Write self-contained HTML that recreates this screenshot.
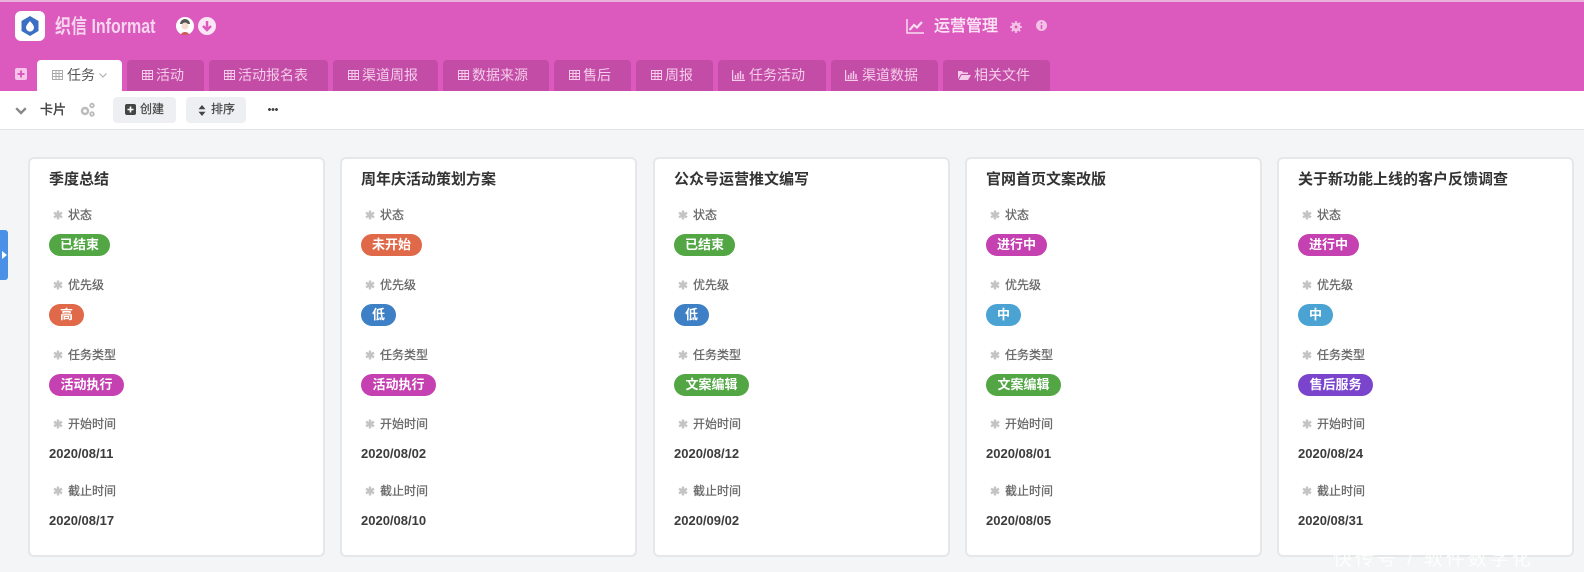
<!DOCTYPE html>
<html lang="zh">
<head>
<meta charset="utf-8">
<style>
*{box-sizing:border-box}
html,body{margin:0;padding:0}
body{width:1584px;height:566px;overflow:hidden;position:relative;background:#f4f5f6;font-family:"Liberation Sans","Noto Sans CJK SC",sans-serif;color:#333}
.abs,.tab,.card,.card>*{position:absolute}
#hd{left:0;top:0;width:1584px;height:91px;background:#dc59bd;border-top:2px solid #e9b3dc;position:absolute}
#bar{position:absolute;left:0;top:91px;width:1584px;height:39px;background:#fff;border-bottom:1px solid #e3e3e5}
.tab{top:60px;height:31px;background:#c34da6;border-radius:4px 4px 0 0;color:#f5cdea;font-size:14px;line-height:31px;white-space:nowrap}
.tab svg{position:absolute;top:10px}
.tab span{position:absolute;top:0}
.tab.on{background:#fff;color:#555}
.card{top:157px;width:297px;height:400px;background:#fff;border:2px solid #e6e7e9;border-radius:6px}
.t{left:19px;top:11px;font-size:15px;line-height:20px;font-weight:700;color:#333;white-space:nowrap}
.s{left:23px;width:10px;height:10px}
.l{left:38px;font-size:12px;line-height:16px;color:#666;-webkit-text-stroke:.25px #666;white-space:nowrap}
.p{left:19px;height:22px;border-radius:11px;color:#fff;font-size:13px;font-weight:700;line-height:21px;text-align:center;white-space:nowrap}
.d{left:19px;font-size:13px;line-height:16px;font-weight:700;color:#3c3c3c;white-space:nowrap}
.y1{top:48px}.y2{top:118px}.y3{top:188px}.y4{top:257px}.y5{top:324px}
.s.y1{top:51px}.s.y2{top:121px}.s.y3{top:191px}.s.y4{top:260px}.s.y5{top:327px}
.p1{top:75px}.p2{top:145px}.p3{top:215px}
.d1{top:287px}.d2{top:354px}
.w3{width:61px}.w1{width:35px}.w4{width:75px}
.gr{background:#52a644}.or{background:#e0694a}.pk{background:#c540b0}.bl{background:#3d80c5}.lb{background:#4ba3d4}.pu{background:#7a45cc}
.btn{position:absolute;top:97px;height:26px;background:#eeeff2;border-radius:4px;font-size:12px;line-height:25px;color:#444;-webkit-text-stroke:.2px #444}
</style>
</head>
<body>
<div id="hd"></div>
<div id="bar"></div>

<!-- logo -->
<svg class="abs" style="left:15px;top:11px" width="30" height="30" viewBox="0 0 30 30"><rect width="30" height="30" rx="6" fill="#fff"/><path d="M15 5l8.500 5v10L15 25l-8.500-5V10z" fill="#3b6fc4"/><path d="M15 10c2.500 3 4 4.800 4 6.600a4 4 0 0 1-8 0c0-1.800 1.500-3.600 4-6.600z" fill="#fff"/></svg>
<div class="abs" style="left:55px;top:13px;font-size:20px;line-height:28px;color:#f7d5ee;font-weight:700;white-space:nowrap;transform:scaleX(.8);transform-origin:0 0">织信 Informat</div>
<svg class="abs" style="left:176px;top:17px" width="18" height="18" viewBox="0 0 18 18"><circle cx="9" cy="9" r="9" fill="#fff"/><path d="M4 7a5 5 0 0 1 10 0z" fill="#555"/><circle cx="9" cy="9" r="3.500" fill="#f5dcd0"/><path d="M5 18c0-4 8-4 8 0z" fill="#c9605c"/></svg>
<svg class="abs" style="left:198px;top:17px" width="18" height="18" viewBox="0 0 18 18"><circle cx="9" cy="9" r="9" fill="#fbe6f6"/><path d="M9 4v9M5 9l4 4 4-4" fill="none" stroke="#dc59bd" stroke-width="2.500"/></svg>

<!-- title -->
<svg class="abs" style="left:906px;top:17px" width="19" height="18" viewBox="0 0 19 18"><path d="M1 2v14h17" fill="none" stroke="#f8dcf1" stroke-width="1.500"/><path d="M3.500 13l4.500-5 3 2.500L16 5" fill="none" stroke="#f8dcf1" stroke-width="2.200"/></svg>
<div class="abs" style="left:934px;top:16px;font-size:16px;line-height:22px;color:#fbe6f6;-webkit-text-stroke:.4px #fbe6f6;white-space:nowrap">运营管理</div>
<svg class="abs" style="left:1010px;top:21px" width="12" height="12" viewBox="0 0 12 12"><circle cx="6" cy="6" r="4.500" fill="#f3c0e6"/><circle cx="6" cy="6" r="1.500" fill="#dc59bd"/><path d="M6 0v2M6 10v2M0 6h2M10 6h2M1.800 1.800l1.400 1.400M8.800 8.800l1.400 1.400M1.800 10.200l1.400-1.400M8.800 3.200l1.400-1.400" stroke="#f3c0e6" stroke-width="1.800"/></svg>
<svg class="abs" style="left:1036px;top:20px" width="11" height="11" viewBox="0 0 11 11"><circle cx="5.500" cy="5.500" r="5.500" fill="#f3c0e6"/><path d="M5.500 2v1.500M5.500 5v4" stroke="#dc59bd" stroke-width="1.600"/></svg>

<!-- add tab -->
<svg class="abs" style="left:15px;top:68px" width="12" height="12" viewBox="0 0 12 12"><rect width="12" height="12" rx="2" fill="#f5c6ea"/><path d="M6 2.500v7M2.500 6h7" stroke="#dc59bd" stroke-width="2"/></svg>

<!-- tabs -->
<div class="tab on" style="left:37px;width:85px"><svg style="left:15px" width="11" height="10" viewBox="0 0 11 10"><path d="M.5.500h10v9H.500zM.5 3.500h10M.5 6.500h10M4 .5v9M7 .5v9" fill="none" stroke="#aaa"/></svg><span style="left:30px">任务</span><svg style="left:62px;top:13px" width="8" height="5" viewBox="0 0 8 5"><path d="M.5.500L4 4 7.500.500" fill="none" stroke="#aaa"/></svg></div>
<div class="tab" style="left:127px;width:77px"><svg style="left:15px" width="11" height="10" viewBox="0 0 11 10"><path d="M.5.500h10v9H.500zM.5 3.500h10M.5 6.500h10M4 .5v9M7 .5v9" fill="none" stroke="#f5cdea"/></svg><span style="left:29px">活动</span></div>
<div class="tab" style="left:209px;width:119px"><svg style="left:15px" width="11" height="10" viewBox="0 0 11 10"><path d="M.5.500h10v9H.500zM.5 3.500h10M.5 6.500h10M4 .5v9M7 .5v9" fill="none" stroke="#f5cdea"/></svg><span style="left:29px">活动报名表</span></div>
<div class="tab" style="left:333px;width:105px"><svg style="left:15px" width="11" height="10" viewBox="0 0 11 10"><path d="M.5.500h10v9H.500zM.5 3.500h10M.5 6.500h10M4 .5v9M7 .5v9" fill="none" stroke="#f5cdea"/></svg><span style="left:29px">渠道周报</span></div>
<div class="tab" style="left:443px;width:106px"><svg style="left:15px" width="11" height="10" viewBox="0 0 11 10"><path d="M.5.500h10v9H.500zM.5 3.500h10M.5 6.500h10M4 .5v9M7 .5v9" fill="none" stroke="#f5cdea"/></svg><span style="left:29px">数据来源</span></div>
<div class="tab" style="left:554px;width:77px"><svg style="left:15px" width="11" height="10" viewBox="0 0 11 10"><path d="M.5.500h10v9H.500zM.5 3.500h10M.5 6.500h10M4 .5v9M7 .5v9" fill="none" stroke="#f5cdea"/></svg><span style="left:29px">售后</span></div>
<div class="tab" style="left:636px;width:77px"><svg style="left:15px" width="11" height="10" viewBox="0 0 11 10"><path d="M.5.500h10v9H.500zM.5 3.500h10M.5 6.500h10M4 .5v9M7 .5v9" fill="none" stroke="#f5cdea"/></svg><span style="left:29px">周报</span></div>
<div class="tab" style="left:718px;width:108px"><svg style="left:14px" width="13" height="11" viewBox="0 0 13 11"><path d="M.5 0v10.500H13M3.500 9V5M6 9V3M8.500 9V1M11 9V4" fill="none" stroke="#f5cdea" stroke-width="1.400"/></svg><span style="left:31px">任务活动</span></div>
<div class="tab" style="left:831px;width:107px"><svg style="left:14px" width="13" height="11" viewBox="0 0 13 11"><path d="M.5 0v10.500H13M3.500 9V5M6 9V3M8.500 9V1M11 9V4" fill="none" stroke="#f5cdea" stroke-width="1.400"/></svg><span style="left:31px">渠道数据</span></div>
<div class="tab" style="left:943px;width:107px"><svg style="left:15px" width="13" height="10" viewBox="0 0 13 10"><path d="M0 1h4l1 1.500h5V4H3L0 9zM3.500 5H13l-3 5H.8z" fill="#f5cdea"/></svg><span style="left:31px">相关文件</span></div>

<!-- toolbar -->
<svg class="abs" style="left:15px;top:107px" width="12" height="8" viewBox="0 0 12 8"><path d="M1.200 1.200L6 6l4.800-4.800" fill="none" stroke="#888" stroke-width="2.400"/></svg>
<div class="abs" style="left:40px;top:100px;font-size:13px;line-height:19px;color:#444;-webkit-text-stroke:.4px #444">卡片</div>
<svg class="abs" style="left:80px;top:102px" width="15" height="15" viewBox="0 0 15 15"><circle cx="5" cy="9" r="3" fill="none" stroke="#bbb" stroke-width="2.400"/><circle cx="12" cy="3.500" r="1.800" fill="none" stroke="#bbb" stroke-width="1.800"/><circle cx="12" cy="12" r="1.800" fill="none" stroke="#bbb" stroke-width="1.800"/></svg>
<div class="btn" style="left:113px;width:63px"><svg style="position:absolute;left:12px;top:7px" width="11" height="11" viewBox="0 0 11 11"><rect width="11" height="11" rx="2" fill="#444"/><path d="M5.500 2.500v6M2.500 5.500h6" stroke="#fff" stroke-width="1.600"/></svg><span style="position:absolute;left:27px">创建</span></div>
<div class="btn" style="left:186px;width:60px"><svg style="position:absolute;left:12px;top:8px" width="8" height="11" viewBox="0 0 8 11"><path d="M4 0l3.500 4.200h-7zM4 11L.5 6.800h7z" fill="#444"/></svg><span style="position:absolute;left:25px">排序</span></div>
<div class="abs" style="left:268px;top:108px;width:10px;height:3px;background-image:radial-gradient(circle at 1.500px 1.500px,#444 1.400px,transparent 1.500px);background-size:3.500px 3px"></div>

<!-- side handle -->
<div class="abs" style="left:0;top:230px;width:8px;height:50px;background:#4a90e6;border-radius:0 3px 3px 0"></div>
<svg class="abs" style="left:2px;top:251px" width="5" height="8" viewBox="0 0 5 8"><path d="M0 0l5 4-5 4z" fill="#fff"/></svg>

<!-- card 1 -->
<div class="card" style="left:28px">
<div class="t">季度总结</div>
<svg class="s y1" viewBox="0 0 10 10"><path d="M5 .5v9M1 2.700l8 4.600M9 2.700L1 7.300" stroke="#c4c4c4" stroke-width="2.400"/></svg><div class="l y1">状态</div>
<div class="p p1 w3 gr">已结束</div>
<svg class="s y2" viewBox="0 0 10 10"><path d="M5 .5v9M1 2.700l8 4.600M9 2.700L1 7.300" stroke="#c4c4c4" stroke-width="2.400"/></svg><div class="l y2">优先级</div>
<div class="p p2 w1 or">高</div>
<svg class="s y3" viewBox="0 0 10 10"><path d="M5 .5v9M1 2.700l8 4.600M9 2.700L1 7.300" stroke="#c4c4c4" stroke-width="2.400"/></svg><div class="l y3">任务类型</div>
<div class="p p3 w4 pk">活动执行</div>
<svg class="s y4" viewBox="0 0 10 10"><path d="M5 .5v9M1 2.700l8 4.600M9 2.700L1 7.300" stroke="#c4c4c4" stroke-width="2.400"/></svg><div class="l y4">开始时间</div>
<div class="d d1">2020/08/11</div>
<svg class="s y5" viewBox="0 0 10 10"><path d="M5 .5v9M1 2.700l8 4.600M9 2.700L1 7.300" stroke="#c4c4c4" stroke-width="2.400"/></svg><div class="l y5">截止时间</div>
<div class="d d2">2020/08/17</div>
</div>

<!-- card 2 -->
<div class="card" style="left:340px">
<div class="t">周年庆活动策划方案</div>
<svg class="s y1" viewBox="0 0 10 10"><path d="M5 .5v9M1 2.700l8 4.600M9 2.700L1 7.300" stroke="#c4c4c4" stroke-width="2.400"/></svg><div class="l y1">状态</div>
<div class="p p1 w3 or">未开始</div>
<svg class="s y2" viewBox="0 0 10 10"><path d="M5 .5v9M1 2.700l8 4.600M9 2.700L1 7.300" stroke="#c4c4c4" stroke-width="2.400"/></svg><div class="l y2">优先级</div>
<div class="p p2 w1 bl">低</div>
<svg class="s y3" viewBox="0 0 10 10"><path d="M5 .5v9M1 2.700l8 4.600M9 2.700L1 7.300" stroke="#c4c4c4" stroke-width="2.400"/></svg><div class="l y3">任务类型</div>
<div class="p p3 w4 pk">活动执行</div>
<svg class="s y4" viewBox="0 0 10 10"><path d="M5 .5v9M1 2.700l8 4.600M9 2.700L1 7.300" stroke="#c4c4c4" stroke-width="2.400"/></svg><div class="l y4">开始时间</div>
<div class="d d1">2020/08/02</div>
<svg class="s y5" viewBox="0 0 10 10"><path d="M5 .5v9M1 2.700l8 4.600M9 2.700L1 7.300" stroke="#c4c4c4" stroke-width="2.400"/></svg><div class="l y5">截止时间</div>
<div class="d d2">2020/08/10</div>
</div>

<!-- card 3 -->
<div class="card" style="left:653px">
<div class="t">公众号运营推文编写</div>
<svg class="s y1" viewBox="0 0 10 10"><path d="M5 .5v9M1 2.700l8 4.600M9 2.700L1 7.300" stroke="#c4c4c4" stroke-width="2.400"/></svg><div class="l y1">状态</div>
<div class="p p1 w3 gr">已结束</div>
<svg class="s y2" viewBox="0 0 10 10"><path d="M5 .5v9M1 2.700l8 4.600M9 2.700L1 7.300" stroke="#c4c4c4" stroke-width="2.400"/></svg><div class="l y2">优先级</div>
<div class="p p2 w1 bl">低</div>
<svg class="s y3" viewBox="0 0 10 10"><path d="M5 .5v9M1 2.700l8 4.600M9 2.700L1 7.300" stroke="#c4c4c4" stroke-width="2.400"/></svg><div class="l y3">任务类型</div>
<div class="p p3 w4 gr">文案编辑</div>
<svg class="s y4" viewBox="0 0 10 10"><path d="M5 .5v9M1 2.700l8 4.600M9 2.700L1 7.300" stroke="#c4c4c4" stroke-width="2.400"/></svg><div class="l y4">开始时间</div>
<div class="d d1">2020/08/12</div>
<svg class="s y5" viewBox="0 0 10 10"><path d="M5 .5v9M1 2.700l8 4.600M9 2.700L1 7.300" stroke="#c4c4c4" stroke-width="2.400"/></svg><div class="l y5">截止时间</div>
<div class="d d2">2020/09/02</div>
</div>

<!-- card 4 -->
<div class="card" style="left:965px">
<div class="t">官网首页文案改版</div>
<svg class="s y1" viewBox="0 0 10 10"><path d="M5 .5v9M1 2.700l8 4.600M9 2.700L1 7.300" stroke="#c4c4c4" stroke-width="2.400"/></svg><div class="l y1">状态</div>
<div class="p p1 w3 pk">进行中</div>
<svg class="s y2" viewBox="0 0 10 10"><path d="M5 .5v9M1 2.700l8 4.600M9 2.700L1 7.300" stroke="#c4c4c4" stroke-width="2.400"/></svg><div class="l y2">优先级</div>
<div class="p p2 w1 lb">中</div>
<svg class="s y3" viewBox="0 0 10 10"><path d="M5 .5v9M1 2.700l8 4.600M9 2.700L1 7.300" stroke="#c4c4c4" stroke-width="2.400"/></svg><div class="l y3">任务类型</div>
<div class="p p3 w4 gr">文案编辑</div>
<svg class="s y4" viewBox="0 0 10 10"><path d="M5 .5v9M1 2.700l8 4.600M9 2.700L1 7.300" stroke="#c4c4c4" stroke-width="2.400"/></svg><div class="l y4">开始时间</div>
<div class="d d1">2020/08/01</div>
<svg class="s y5" viewBox="0 0 10 10"><path d="M5 .5v9M1 2.700l8 4.600M9 2.700L1 7.300" stroke="#c4c4c4" stroke-width="2.400"/></svg><div class="l y5">截止时间</div>
<div class="d d2">2020/08/05</div>
</div>

<!-- card 5 -->
<div class="card" style="left:1277px">
<div class="t">关于新功能上线的客户反馈调查</div>
<svg class="s y1" viewBox="0 0 10 10"><path d="M5 .5v9M1 2.700l8 4.600M9 2.700L1 7.300" stroke="#c4c4c4" stroke-width="2.400"/></svg><div class="l y1">状态</div>
<div class="p p1 w3 pk">进行中</div>
<svg class="s y2" viewBox="0 0 10 10"><path d="M5 .5v9M1 2.700l8 4.600M9 2.700L1 7.300" stroke="#c4c4c4" stroke-width="2.400"/></svg><div class="l y2">优先级</div>
<div class="p p2 w1 lb">中</div>
<svg class="s y3" viewBox="0 0 10 10"><path d="M5 .5v9M1 2.700l8 4.600M9 2.700L1 7.300" stroke="#c4c4c4" stroke-width="2.400"/></svg><div class="l y3">任务类型</div>
<div class="p p3 w4 pu">售后服务</div>
<svg class="s y4" viewBox="0 0 10 10"><path d="M5 .5v9M1 2.700l8 4.600M9 2.700L1 7.300" stroke="#c4c4c4" stroke-width="2.400"/></svg><div class="l y4">开始时间</div>
<div class="d d1">2020/08/24</div>
<svg class="s y5" viewBox="0 0 10 10"><path d="M5 .5v9M1 2.700l8 4.600M9 2.700L1 7.300" stroke="#c4c4c4" stroke-width="2.400"/></svg><div class="l y5">截止时间</div>
<div class="d d2">2020/08/31</div>
</div>

<div class="abs" style="left:1333px;top:548px;font-size:19px;line-height:24px;color:#fff;letter-spacing:3px;white-space:nowrap;opacity:.9">快传号 / 软件数字化</div>
</body>
</html>
